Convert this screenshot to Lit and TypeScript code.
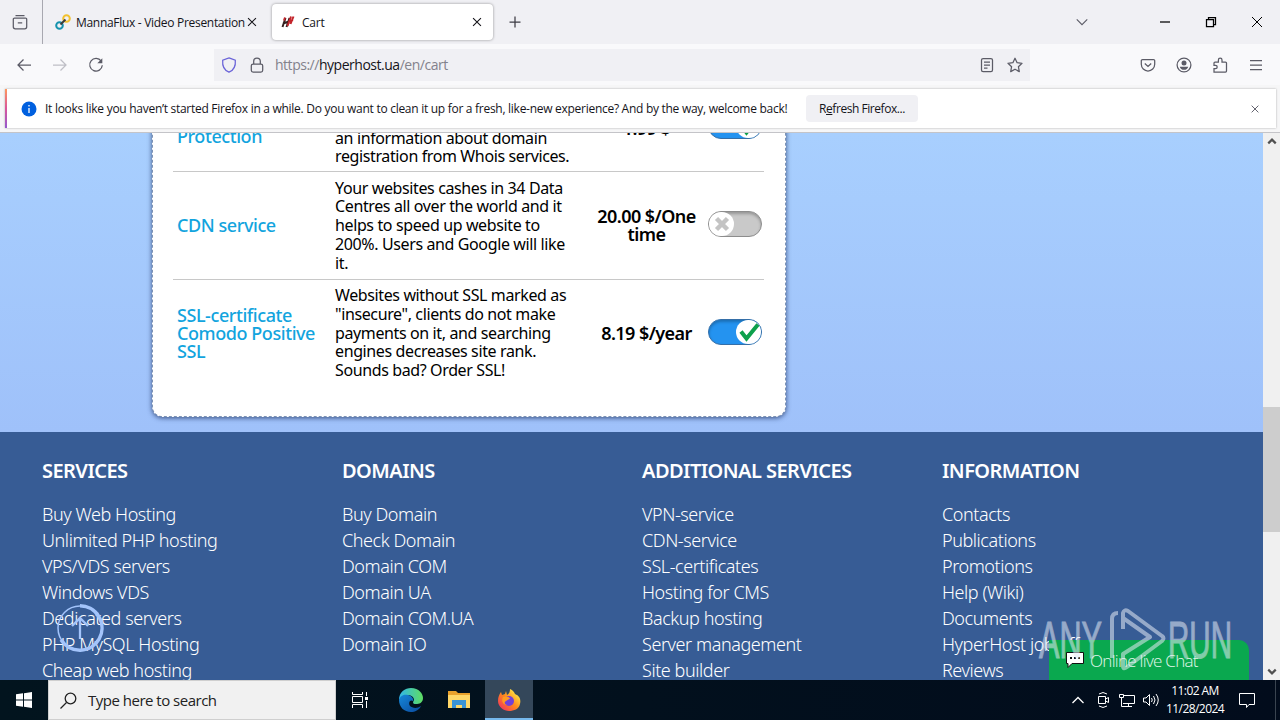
import { html, css, svg, LitElement } from 'lit';
import { customElement, property } from 'lit/decorators.js';

const services = [
	{
		name: ['CDN service'],
		text: ['Your websites cashes in 34 Data', 'Centres all over the world and it', 'helps to speed up website to', '200%. Users and Google will like', 'it.'],
		price: ['20.00 $/One', 'time'],
		on: false
	},
	{
		name: ['SSL-certificate', 'Comodo Positive', 'SSL'],
		text: ['Websites without SSL marked as', '"insecure", clients do not make', 'payments on it, and searching', 'engines decreases site rank.', 'Sounds bad? Order SSL!'],
		price: ['8.19 $/year'],
		on: true
	}
];

const columns = [
	{ title: 'SERVICES', links: ['Buy Web Hosting', 'Unlimited PHP hosting', 'VPS/VDS servers', 'Windows VDS', 'Dedicated servers', 'PHP MySQL Hosting', 'Cheap web hosting'] },
	{ title: 'DOMAINS', links: ['Buy Domain', 'Check Domain', 'Domain COM', 'Domain UA', 'Domain COM.UA', 'Domain IO'] },
	{ title: 'ADDITIONAL SERVICES', links: ['VPN-service', 'CDN-service', 'SSL-certificates', 'Hosting for CMS', 'Backup hosting', 'Server management', 'Site builder'] },
	{ title: 'INFORMATION', links: ['Contacts', 'Publications', 'Promotions', 'Help (Wiki)', 'Documents', 'HyperHost job offers', 'Reviews'] }
];

const icons = {
	view: svg`<path d="M3.500 1.500h9M2.500 4h11a1.200 1.200 0 0 1 1.200 1.200v7.600a2 2 0 0 1-2 2H3.300a2 2 0 0 1-2-2V5.200A1.200 1.200 0 0 1 2.500 4zM5.800 8.800h4.400"/>`,
	close: svg`<path d="M3.500 3.500l9 9M12.500 3.500l-9 9"/>`,
	plus: svg`<path d="M8 2.500v11M2.500 8h11"/>`,
	back: svg`<path d="M15 8H2M7.500 2.500 2 8l5.500 5.500"/>`,
	forward: svg`<path d="M1 8h13M8.500 2.500 14 8l-5.500 5.500"/>`,
	reload: svg`<path d="M13.200 4.200A6.300 6.300 0 1 0 14.300 8.300"/><path d="M14.300 1.200v5H9.300z" fill="currentColor" stroke="none"/>`,
	shield: svg`<path d="M8 .9 14.300 3.200c.5 5.400-1 9.800-6.300 12C2.700 13 1.200 8.600 1.700 3.200z"/>`,
	lock: svg`<rect x="2.300" y="7" width="11.400" height="8" rx="1.800"/><path d="M4.700 7V4.300a3.300 3.300 0 0 1 6.600 0V7"/>`,
	reader: svg`<rect x="2.500" y="1.500" width="11" height="13" rx="1.600"/><path d="M5 5h6M5 8h6M5 11h3.500"/>`,
	star: svg`<path d="m8 1.200 2.100 4.500 4.900.6-3.600 3.400.9 4.900L8 12.200l-4.300 2.400.9-4.900L1 6.300l4.900-.6z" stroke-linejoin="round"/>`,
	pocket: svg`<path d="M2.500 2.500h11a1.200 1.200 0 0 1 1.200 1.200v3.600a6.700 6.700 0 0 1-13.400 0V3.700a1.200 1.200 0 0 1 1.200-1.200zM4.800 6.500 8 9.500l3.200-3"/>`,
	account: svg`<circle cx="8" cy="8" r="6.900"/><circle cx="8" cy="6" r="2.500" fill="currentColor" stroke="none"/><path d="M3.800 9.700h8.400c-.4 2-2 3.100-4.200 3.100s-3.800-1.100-4.200-3.100z" fill="currentColor" stroke="none"/>`,
	puzzle: svg`<path d="M2 15h11.500a1 1 0 0 0 1-1V6a1 1 0 0 0-1-1H10V3a1.800 1.800 0 0 0-3.600 0v2H3a1 1 0 0 0-1 1v2.300h1.500a1.600 1.600 0 0 1 0 3.400H2z"/>`,
	menu: svg`<path d="M2 3.500h12M2 8h12M2 12.500h12"/>`,
	chevron: svg`<path d="m2 5 6 6 6-6"/>`,
	scrollUp: svg`<path d="m2 11 6-6 6 6" stroke-width="3.500"/>`,
	scrollDown: svg`<path d="m2 5 6 6 6-6" stroke-width="3.500"/>`,
	minimize: svg`<path d="M3 8h10"/>`,
	restore: svg`<path d="M3.500 5.500h7v7h-7zM5.500 5V3.500h7v7H11"/>`,
	quit: svg`<path d="m3 3 10 10M13 3 3 13" stroke-width="1"/>`
};

@customElement('line-icon')
export class LineIcon extends LitElement {
	static styles = css`
		:host {
			display: block;
			width: 16px;
			height: 16px;
			flex: none;
		}

		svg {
			display: block;
			width: 100%;
			height: 100%;
			fill: none;
			stroke: currentColor;
			stroke-width: 1.25;
		}
	`;

	@property() name = 'close';

	render() {
		return html`<svg viewBox="0 0 16 16">${icons[this.name]}</svg>`;
	}
}

@customElement('browser-chrome')
export class BrowserChrome extends LitElement {
	static styles = css`
		:host {
			display: block;
			height: 133px;
			box-sizing: border-box;
			background: #f6f6f7;
			border-bottom: 1px solid #c4c4c8;
			font: 12px 'Open Sans', sans-serif;
			color: #15141a;
		}

		.tabs {
			display: flex;
			align-items: center;
			height: 44px;
			background: #f0f0f4;
			color: #3d3c45;
		}

		.view {
			display: flex;
			align-items: center;
			width: 43px;
			height: 44px;
			padding-left: 12px;
			box-sizing: border-box;
			border-right: 1px solid #a8a8b0;
			color: #5b5b66;
		}

		.tab {
			display: flex;
			align-items: center;
			height: 36px;
			box-sizing: border-box;
			color: #15141a;
			white-space: nowrap;
		}

		.first {
			width: 222px;
			margin-left: 7px;
			padding-left: 5px;
		}

		.first .label {
			width: 169px;
			letter-spacing: -0.3px;
		}

		.active {
			width: 221px;
			padding: 0 9px 0 8px;
			background: #fff;
			border-radius: 4px;
			box-shadow: 0 0 3px rgba(0, 0, 0, 0.4);
		}

		.active .label {
			flex: 1;
			letter-spacing: -0.2px;
		}

		.favicon {
			width: 16px;
			height: 16px;
			margin-right: 5px;
			flex: none;
		}

		.active .favicon {
			margin-right: 6px;
		}

		.small {
			width: 14px;
			height: 14px;
		}

		.plus {
			margin-left: 14px;
		}

		.window {
			display: flex;
			align-items: center;
			margin-left: auto;
			gap: 30px;
			padding-right: 15px;
			color: #000;
		}

		.window .list {
			width: 14px;
			height: 14px;
			margin-right: 38px;
			color: #5b5b66;
		}

		.bar {
			display: flex;
			align-items: center;
			height: 41px;
			background: #f9f9fb;
			color: #5b5b66;
		}

		.nav {
			display: flex;
			gap: 20px;
			width: 214px;
			padding-left: 16px;
			box-sizing: border-box;
		}

		.off {
			color: #bfbfc6;
		}

		.url {
			display: flex;
			align-items: center;
			width: 816px;
			height: 32px;
			box-sizing: border-box;
			padding: 0 7px;
			background: #f0f0f4;
		}

		.shield {
			color: #6a63d8;
			margin-right: 12px;
		}

		.address {
			flex: 1;
			margin-left: 10px;
			font-size: 14px;
			letter-spacing: -0.48px;
			color: #83828c;
		}

		.address b {
			font-weight: 400;
			color: #15141a;
		}

		.reader {
			margin-right: 12px;
		}

		.tools {
			display: flex;
			gap: 20px;
			margin-left: auto;
			padding-right: 16px;
		}

		.notice {
			display: flex;
			align-items: center;
			width: 1271px;
			height: 39px;
			margin: 4px 0 0 5px;
			box-sizing: border-box;
			padding: 0 14px 0 14px;
			border-left: 2px solid;
			border-image: linear-gradient(#ff9a5a, #d9559b, #9059d0) 1;
			background: #fff;
			box-shadow: 0 0 2px rgba(0, 0, 0, 0.3);
		}

		.info {
			width: 16px;
			height: 16px;
			flex: none;
		}

		.message {
			width: 760px;
			padding-left: 8px;
			box-sizing: border-box;
			letter-spacing: -0.28px;
			white-space: nowrap;
		}

		.refresh {
			margin-left: 9px;
			width: 112px;
			line-height: 27px;
			border-radius: 4px;
			background: #f0f0f4;
			text-align: center;
			letter-spacing: -0.45px;
		}

		.dismiss {
			width: 12px;
			height: 12px;
			margin-left: auto;
			margin-right: 1px;
			color: #5b5b66;
		}
	`;

	render() {
		return html`
			<div class="tabs">
				<div class="view"><line-icon name="view"></line-icon></div>
				<div class="tab first">
					<svg class="favicon" viewBox="0 0 16 16" fill="none" stroke-width="2">
						<circle cx="11.500" cy="4.500" r="3.300" stroke="#f2c12e" />
						<circle cx="4.500" cy="11.500" r="3.300" stroke="#1592ad" />
						<path d="m5.500 10.500 5-5" stroke="#3c3c3c" />
					</svg>
					<span class="label">MannaFlux - Video Presentation</span>
					<line-icon class="small" name="close"></line-icon>
				</div>
				<div class="tab active">
					<svg class="favicon" viewBox="0 0 16 16" fill="none" stroke-width="2">
						<path d="M5.500 4 2.500 13M9.500 4l-3 9M3 9.500l6-2" stroke="#33201f" />
						<path d="M11 2.500 7.500 12M13.500 2.500 10.500 10M9 7.500l4-1.500M5 3.500l-1 3" stroke="#c3242b" />
					</svg>
					<span class="label">Cart</span>
					<line-icon class="small" name="close"></line-icon>
				</div>
				<line-icon class="plus" name="plus"></line-icon>
				<div class="window">
					<line-icon class="list" name="chevron"></line-icon>
					<line-icon name="minimize"></line-icon>
					<line-icon name="restore"></line-icon>
					<line-icon name="quit"></line-icon>
				</div>
			</div>
			<div class="bar">
				<div class="nav">
					<line-icon name="back"></line-icon>
					<line-icon class="off" name="forward"></line-icon>
					<line-icon name="reload"></line-icon>
				</div>
				<div class="url">
					<line-icon class="shield" name="shield"></line-icon>
					<line-icon name="lock"></line-icon>
					<span class="address">https://<b>hyperhost.ua</b>/en/cart</span>
					<line-icon class="reader" name="reader"></line-icon>
					<line-icon name="star"></line-icon>
				</div>
				<div class="tools">
					<line-icon name="pocket"></line-icon>
					<line-icon name="account"></line-icon>
					<line-icon name="puzzle"></line-icon>
					<line-icon name="menu"></line-icon>
				</div>
			</div>
			<div class="notice">
				<svg class="info" viewBox="0 0 16 16">
					<circle cx="8" cy="8" r="7.500" fill="#0060df" />
					<path d="M8 7v5M8 4v1.600" stroke="#fff" stroke-width="1.300" />
				</svg>
				<span class="message">It looks like you haven’t started Firefox in a while. Do you want to clean it up for a fresh, like-new experience? And by the way, welcome back!</span>
				<span class="refresh">R<u>e</u>fresh Firefox...</span>
				<line-icon class="dismiss" name="close"></line-icon>
			</div>
		`;
	}
}

@customElement('toggle-switch')
export class ToggleSwitch extends LitElement {
	static styles = css`
		:host {
			display: block;
			width: 54px;
			height: 26px;
		}

		.track {
			display: flex;
			height: 26px;
			box-sizing: border-box;
			border: 1px solid #8d8d8d;
			border-radius: 13px;
			background: #c9c9c9;
			box-shadow: inset 0 2px 3px rgba(0, 0, 0, 0.25);
		}

		.knob {
			display: flex;
			align-items: center;
			justify-content: center;
			width: 25px;
			height: 24px;
			border-radius: 12px;
			background: #fff;
		}

		:host([on]) .track {
			justify-content: flex-end;
			border-color: #356fa8;
			background: #2493f0;
		}

		svg {
			width: 24px;
			height: 24px;
			fill: none;
		}
	`;

	@property({ type: Boolean, reflect: true }) on = false;

	render() {
		return html`<div class="track">
			<div class="knob">
				<svg viewBox="0 0 24 24">
					${this.on
						? svg`<path d="m4 11.500 5.500 7L21 4.500" stroke="#0da04c" stroke-width="4" />`
						: svg`<path d="m6.500 6.500 11 11M17.500 6.500l-11 11" stroke="#c4c4c4" stroke-width="4.500" />`}
				</svg>
			</div>
		</div>`;
	}
}

@customElement('cart-page')
export class CartPage extends LitElement {
	static styles = css`
		:host {
			display: flex;
			position: relative;
			height: 547px;
			overflow: hidden;
			font-family: 'Noto Sans', sans-serif;
		}

		.content {
			width: 1263px;
			overflow: hidden;
		}

		.top {
			height: 299px;
			overflow: hidden;
			background: linear-gradient(#a8cffe, #9fc1fa);
		}

		.card {
			width: 634px;
			height: 324px;
			margin: -40px 0 0 152px;
			box-sizing: border-box;
			padding: 0 21px 0 20px;
			border: 1px dashed #7d93b5;
			border-radius: 10px;
			background: #fff;
			box-shadow: 0 1px 5px rgba(20, 40, 90, 0.75);
		}

		.row {
			display: grid;
			grid-template-columns: 158px 258px 115px 54px;
			align-items: center;
			height: 108px;
			box-sizing: border-box;
			padding: 0 0 1px 4px;
			border-bottom: 1px solid #c8c8c8;
		}

		.row.head {
			height: 78px;
			align-items: end;
			padding-bottom: 0;
		}

		.row:last-child {
			border: 0;
			padding-bottom: 3px;
		}

		.name {
			font-size: 18px;
			font-weight: 500;
			line-height: 18px;
			letter-spacing: -0.43px;
			color: #12a4de;
			white-space: nowrap;
		}

		.text {
			padding-top: 1px;
			font-size: 16px;
			line-height: 18.700px;
			letter-spacing: -0.38px;
			white-space: nowrap;
			color: #000;
		}

		.price {
			font-size: 18px;
			font-weight: 600;
			line-height: 18px;
			letter-spacing: -0.55px;
			text-align: center;
			white-space: nowrap;
			padding-right: 8px;
		}

		.row toggle-switch {
			margin-bottom: 3px;
		}

		.row:last-child toggle-switch {
			margin-bottom: 1px;
		}

		.head .name {
			padding-bottom: 26px;
		}

		.head .text {
			padding-bottom: 5px;
		}

		.head .price {
			padding-bottom: 34px;
		}

		.row.head toggle-switch {
			margin-bottom: 32px;
		}

		.footer {
			display: grid;
			grid-template-columns: repeat(4, 300px);
			height: 248px;
			box-sizing: border-box;
			padding: 25px 0 0 42px;
			background: #375c95;
			color: #fff;
		}

		.title {
			margin-bottom: 16px;
			font-size: 20px;
			font-weight: 600;
			line-height: 28px;
			letter-spacing: -0.55px;
		}

		.link {
			font-size: 18px;
			font-weight: 300;
			line-height: 26px;
			letter-spacing: -0.43px;
			white-space: nowrap;
		}

		.scrollbar {
			display: flex;
			flex-direction: column;
			align-items: center;
			width: 17px;
			background: #f0f0f0;
			color: #505050;
		}

		.arrow {
			width: 10px;
			height: 17px;
		}

		.thumb {
			width: 17px;
			height: 125px;
			margin-top: 257px;
			margin-bottom: auto;
			background: #cdcdcd;
		}

		.to-top {
			position: absolute;
			left: 55px;
			top: 470px;
			width: 50px;
			height: 50px;
		}

		.chat {
			position: absolute;
			left: 1049px;
			top: 507px;
			width: 200px;
			height: 40px;
			display: flex;
			align-items: center;
			gap: 5px;
			padding-left: 16px;
			box-sizing: border-box;
			border-radius: 0 10px 0 0;
			background: #0aa84f;
			color: #e2f8ec;
			font: 300 17px 'Open Sans', sans-serif;
			letter-spacing: -0.7px;
		}

		.bubble {
			width: 20px;
			height: 18px;
		}

		.watermark {
			position: absolute;
			left: 1036px;
			top: 472px;
			width: 198px;
			height: 70px;
			opacity: 0.55;
		}

		.watermark text {
			font: 51px 'Liberation Sans', sans-serif;
			fill: #e4eaf5;
			stroke: #e4eaf5;
			stroke-width: 1px;
		}
	`;

	render() {
		return html`
			<div class="content">
				<div class="top">
					<div class="card">
						<div class="row head">
							<div class="name">Protection</div>
							<div class="text">an information about domain<br />registration from Whois services.</div>
							<div class="price">1.99 $</div>
							<toggle-switch on></toggle-switch>
						</div>
						${services.map(
							(item) => html`<div class="row">
								<div class="name">${this._lines(item.name)}</div>
								<div class="text">${this._lines(item.text)}</div>
								<div class="price">${this._lines(item.price)}</div>
								<toggle-switch ?on=${item.on}></toggle-switch>
							</div>`
						)}
					</div>
				</div>
				<div class="footer">
					${columns.map(
						(column) => html`<div>
							<div class="title">${column.title}</div>
							${column.links.map((link) => html`<div class="link">${link}</div>`)}
						</div>`
					)}
				</div>
			</div>
			<div class="scrollbar">
				<line-icon class="arrow" name="scrollUp"></line-icon>
				<div class="thumb"></div>
				<line-icon class="arrow" name="scrollDown"></line-icon>
			</div>
			<svg class="to-top" viewBox="0 0 50 50" fill="none" stroke="#a3c4fb">
				<circle cx="25" cy="25" r="22" stroke-width="1.500" />
				<path d="M25 2.800a22.200 22.200 0 1 1-19 34" stroke-width="3.500" />
				<path d="M25 36V15M17 23l8-8 8 8" stroke-width="2.300" />
			</svg>
			<div class="chat">
				<svg class="bubble" viewBox="0 0 20 18">
					<path d="M1.500 1.500h17v11H7L3 16.500v-4H1.500z" fill="#fff" stroke="#111" />
					<path d="M5 7h2M9 7h2M13 7h2" stroke="#111" stroke-width="2" />
				</svg>
				<span>Online live Chat</span>
			</div>
			<svg class="watermark" viewBox="0 0 198 70">
				<text x="3" y="53" textLength="63" lengthAdjust="spacingAndGlyphs">ANY</text>
				<text x="132" y="53" textLength="64" lengthAdjust="spacingAndGlyphs">RUN</text>
				<g fill="none" stroke="#e4eaf5" stroke-width="4" stroke-linejoin="round">
					<path d="M76 53V14q0-6 6-6M87 24V8q1-4 5-2l34 25q3 2 0 5L91 62q-4 3-4-1V49l27-17-27-19" />
				</g>
			</svg>
		`;
	}

	_lines(lines) {
		return lines.map((line) => html`<div>${line}</div>`);
	}
}

@customElement('task-bar')
export class TaskBar extends LitElement {
	static styles = css`
		:host {
			display: flex;
			align-items: center;
			height: 40px;
			background: linear-gradient(90deg, #02141e, #020c1c);
			color: #fff;
			font: 12px 'Open Sans', sans-serif;
		}

		svg {
			flex: none;
			display: block;
			fill: none;
			stroke: currentColor;
		}

		.start {
			width: 16px;
			height: 16px;
			margin: 0 16px;
		}

		.search {
			display: flex;
			align-items: center;
			width: 288px;
			height: 40px;
			box-sizing: border-box;
			padding-left: 11px;
			gap: 11px;
			border: 1px solid #cfcfcf;
			background: #f1f1f1;
			color: #222;
			font-size: 15px;
			letter-spacing: -0.5px;
		}

		.glass {
			width: 17px;
			height: 17px;
		}

		.app {
			display: flex;
			align-items: center;
			justify-content: center;
			width: 48px;
			height: 40px;
			box-sizing: border-box;
		}

		.gap {
			margin-left: 3px;
		}

		.app.current {
			background: #34475a;
			border-bottom: 2px solid #76b9ed;
			margin-left: 2px;
			padding-top: 2px;
		}

		.tray {
			display: flex;
			align-items: center;
			height: 40px;
			margin-left: auto;
			padding-right: 19px;
			margin-right: 4px;
			border-right: 1px solid #3a4450;
		}

		.hidden-items {
			margin-right: 9px;
		}

		.camera {
			margin-right: 7px;
		}

		.volume {
			margin-left: 1px;
		}

		.clock {
			width: 62px;
			margin: 0 12px 0 -1px;
			text-align: center;
			line-height: 18px;
			letter-spacing: -0.56px;
			white-space: nowrap;
		}
	`;

	render() {
		return html`
			<svg class="start" viewBox="0 0 16 16">
				<path d="M0 2.300 7 1.300v6.200H0zM8 1.200l8-1.200v7.500H8zM0 8.500h7v6.200l-7-1zM8 8.500h8V16l-8-1.200z" fill="#fff" stroke="none" />
			</svg>
			<div class="search">
				<svg class="glass" viewBox="0 0 17 17"><circle cx="10.500" cy="6.500" r="5.300" stroke-width="1.300" /><path d="m6.500 10.500-6 6" stroke-width="1.300" /></svg>
				<span>Type here to search</span>
			</div>
			<div class="app">
				<svg width="18" height="18" viewBox="0 0 18 18">
					<path d="M1.500 1v2.500h10V1M1.500 5.500h10v6h-10zM1.500 17v-3.500h10V17M15.500 1v4M15.500 10v7" />
					<path d="M14 6h3v3h-3z" fill="#fff" stroke="none" />
				</svg>
			</div>
			<div class="app gap">
				<svg width="26" height="26" viewBox="0 0 26 26" stroke="none">
					<defs>
						<linearGradient id="sea" x1="0" x2="1"><stop stop-color="#31b7ea" /><stop offset="1" stop-color="#5fdd62" /></linearGradient>
						<linearGradient id="deep" x1="0" x2="1" y2="1"><stop stop-color="#1688d9" /><stop offset="1" stop-color="#0a4a9e" /></linearGradient>
					</defs>
					<path d="M1 13C1 5 7 1 13 1c8 0 12 6 12 10 0 5-4 6-7 6-4 0-3-2-2-4 0-4-5-6-9-4-4 1-6 4-6 4z" fill="url(#sea)" stroke="none" />
					<path d="M1 13c1-5 6-6 9-5 4 1 6 4 5 6-3-2-5 2-3 5 2 2 7 3 11 0-2 4-6 6-10 6C6 25 1 20 1 13z" fill="url(#deep)" stroke="none" />
				</svg>
			</div>
			<div class="app">
				<svg width="22" height="20" viewBox="0 0 22 20">
					<path d="M0 1h8l2 2h12v15H0z" fill="#e9a12c" stroke="none" />
					<path d="M0 5h22v13H0z" fill="#ffd768" stroke="none" />
					<path d="M4 10h14v8h-4v-3H8v3H4z" fill="#3b93d4" stroke="none" />
				</svg>
			</div>
			<div class="app current">
				<svg width="24" height="24" viewBox="0 0 24 24">
					<defs><linearGradient id="fire" x1="1" x2="0" y2="1"><stop offset=".1" stop-color="#fff24a" /><stop offset=".5" stop-color="#ff8a1c" /><stop offset="1" stop-color="#f0216b" /></linearGradient></defs>
					<path d="M13 1c3 1 4 3 5 5 5 2 6 6 5 10-1 5-6 7-11 7S1 19 1 13c0-4 1-6 3-9l1 3 3-1 1-3 1 4c2-1 3-3 3-6z" fill="url(#fire)" stroke="none" />
					<circle cx="12" cy="13" r="5" fill="#7141d8" stroke="none" />
					<path d="M6 9c3-1 6-1 7 2-2 0-2 1-4 2s-2 3 1 4c-4 0-6-4-4-8z" fill="#ff9a22" stroke="none" />
				</svg>
			</div>
			<div class="tray">
				<svg class="hidden-items" width="16" height="16" viewBox="0 0 16 16"><path d="m2.500 11 5.500-5.500 5.500 5.500" stroke-width="1.300" /></svg>
				<svg class="camera" width="16" height="18" viewBox="0 0 16 18">
					<path d="M3.500 5.500h7v7h-7zM10.500 8l3-1.500v5l-3-1.500M4 3q4-3 8 0M4 15q4 3 8 0" />
				</svg>
				<svg width="18" height="16" viewBox="0 0 18 16">
					<path d="M5.500 3.500h11v8H5M10.500 11.500v3M6 14.500h8M1.500 2.500h4v3h-4zM3.500 5.500v9h3" />
				</svg>
				<svg class="volume" width="28" height="16" viewBox="0 0 28 16">
					<path d="M6.500 6h2.500L12.500 2.500v11L9 10H6.500zM14.500 6q1.500 2 0 4M16.500 4q3 4 0 8M19 2q4.500 6 0 12" />
				</svg>
				<div class="clock">11:02 AM<br />11/28/2024</div>
				<svg width="18" height="18" viewBox="0 0 18 18"><path d="M1.500 2.500h15v11H11l-2.500 3v-3h-7z" /></svg>
			</div>
		`;
	}
}

@customElement('app-root')
export class AppRoot extends LitElement {
	static styles = css`
		:host {
			display: block;
			width: 1280px;
			height: 720px;
			overflow: hidden;
		}
	`;

	render() {
		return html`
			<browser-chrome></browser-chrome>
			<cart-page></cart-page>
			<task-bar></task-bar>
		`;
	}
}
